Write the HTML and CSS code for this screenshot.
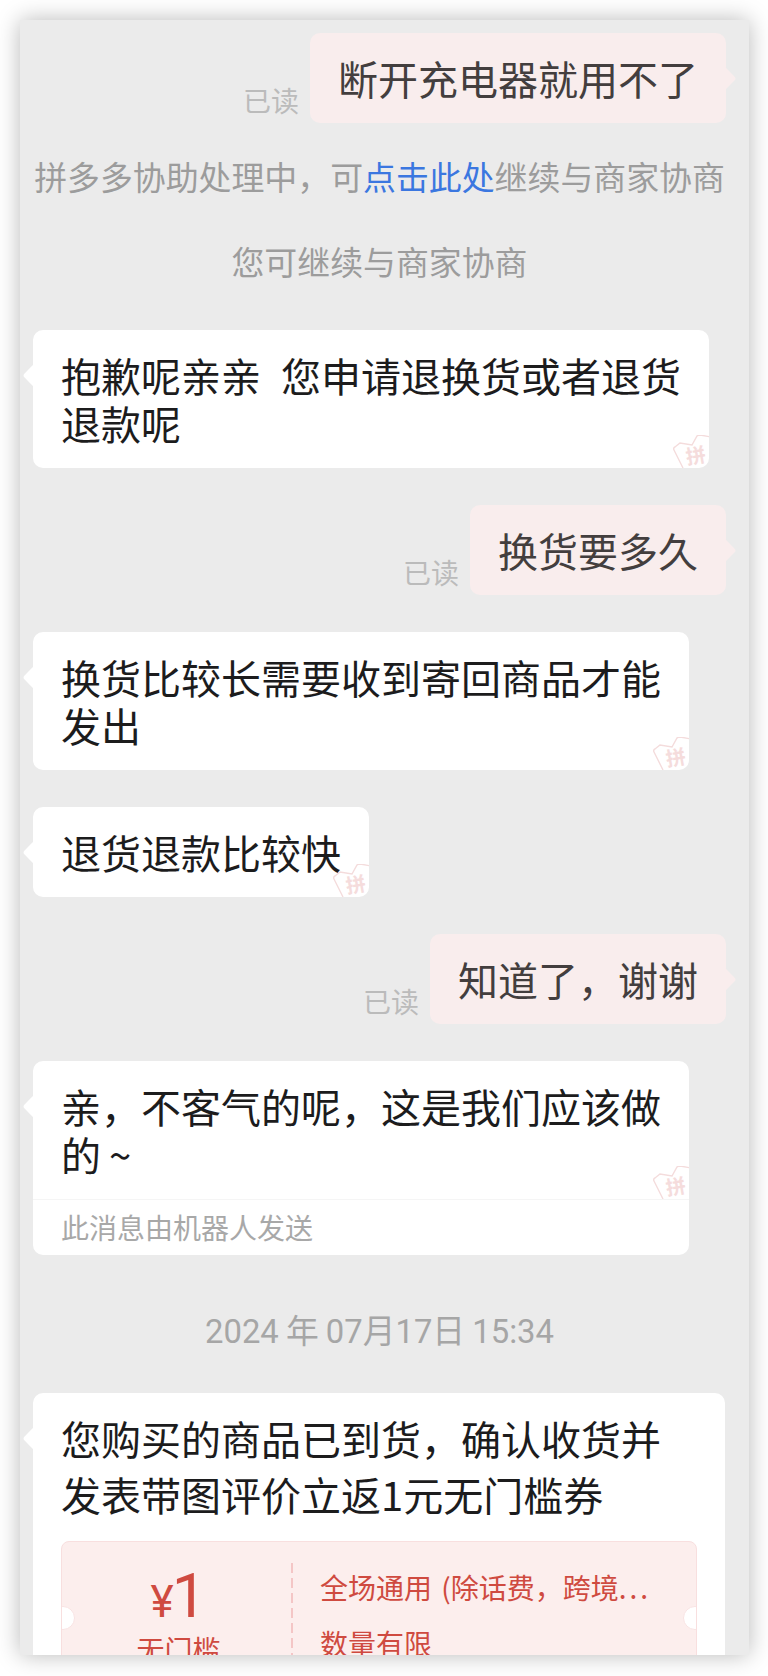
FILE: index.html
```html
<!DOCTYPE html>
<html>
<head>
  <meta charset="utf-8">
  <title>聊天记录</title>
  <link rel="stylesheet" href="styles.css">
</head>
<body>
  <div class="screen">
    <div class="row row-me first">
      <span class="read">已读</span>
      <div class="bubble me">断开充电器就用不了</div>
    </div>

    <p class="notice notice-a">拼多多协助处理中，可<a class="link">点击此处</a>继续与商家协商</p>
    <p class="notice notice-b">您可继续与商家协商</p>

    <div class="row row-shop first-shop">
      <div class="bubble shop">
        <div class="body wide">抱歉呢亲亲&nbsp;&nbsp;您申请退换货或者退货<br>退款呢
          <svg class="stamp" viewBox="0 0 36 33"><use href="#stamp"/><text x="23" y="28" class="stamp-text" transform="rotate(-10 23 21)">拼</text></svg>
        </div>
      </div>
    </div>

    <div class="row row-me">
      <span class="read">已读</span>
      <div class="bubble me">换货要多久</div>
    </div>

    <div class="row row-shop">
      <div class="bubble shop">
        <div class="body">换货比较长需要收到寄回商品才能<br>发出
          <svg class="stamp" viewBox="0 0 36 33"><use href="#stamp"/><text x="23" y="28" class="stamp-text" transform="rotate(-10 23 21)">拼</text></svg>
        </div>
      </div>
    </div>

    <div class="row row-shop">
      <div class="bubble shop">
        <div class="body">退货退款比较快
          <svg class="stamp" viewBox="0 0 36 33"><use href="#stamp"/><text x="23" y="28" class="stamp-text" transform="rotate(-10 23 21)">拼</text></svg>
        </div>
      </div>
    </div>

    <div class="row row-me">
      <span class="read">已读</span>
      <div class="bubble me">知道了，谢谢</div>
    </div>

    <div class="row row-shop">
      <div class="bubble shop">
        <div class="body">亲，不客气的呢，这是我们应该做<br>的<span class="tilde">~</span>
          <svg class="stamp" viewBox="0 0 36 33"><use href="#stamp"/><text x="23" y="28" class="stamp-text" transform="rotate(-10 23 21)">拼</text></svg>
        </div>
        <div class="robot">此消息由机器人发送</div>
      </div>
    </div>

    <p class="time">2024 年 07月17日 15:34</p>

    <div class="card">
      <div class="card-text">您购买的商品已到货，确认收货并<br>发表带图评价立返1元无门槛券</div>
      <div class="coupon">
        <div class="coupon-left">
          <div class="price"><span class="yen">¥</span>1</div>
          <div class="limit">无门槛</div>
        </div>
        <div class="coupon-sep"></div>
        <div class="coupon-right">
          <div class="coupon-line">全场通用 (除话费，跨境<span class="dots">...</span></div>
          <div class="coupon-line">数量有限</div>
        </div>
      </div>
    </div>
  </div>

  <svg class="defs" width="0" height="0">
    <defs>
      <path id="stamp" d="M10 33 L1 15 Q0 13 2 12 L7 8 L19 10 L24 1 Q25 0 27 0 L38 2" fill="none" stroke="#f4dcdc" stroke-width="1.4"/>
    </defs>
  </svg>
</body>
</html>
```

FILE: styles.css
```css
* {
  box-sizing: border-box;
}

html, body {
  margin: 0;
  padding: 0;
  background: #fff;
}

body {
  width: 768px;
  height: 1676px;
  padding: 20px 19px 21px 20px;
  overflow: hidden;
  font-family: "Noto Sans CJK SC", sans-serif;
}

.screen {
  height: 1635px;
  padding: 13px 23px 0 13px;
  background: #ebebeb;
  box-shadow: 0 0 22px rgba(0, 0, 0, .28);
  overflow: hidden;
}

.row {
  display: flex;
  margin-top: 37px;
}

.row.first {
  margin-top: 0;
}

.row.first-shop {
  margin-top: 47px;
}

.row-me {
  justify-content: flex-end;
  align-items: flex-end;
}

.read {
  margin: 0 11px 5px 0;
  font-size: 28px;
  line-height: 36px;
  color: #bbb;
}

.bubble {
  position: relative;
  border-radius: 10px;
  font-size: 40px;
  line-height: 48px;
}

.bubble::before {
  content: "";
  position: absolute;
  top: 37px;
  width: 17px;
  height: 17px;
  border-radius: 3px;
  transform: rotate(45deg);
}

.me {
  padding: 21px 28px;
  background: #f9eded;
  color: #433e3e;
}

.me::before {
  right: -7px;
  background: #f9eded;
}

.shop {
  background: #fff;
  color: #1c1c1d;
}

.shop::before {
  left: -7px;
  background: #fff;
}

.body {
  position: relative;
  padding: 21px 28px;
  overflow: hidden;
  border-radius: 10px 10px 0 0;
}

.body.wide {
  word-spacing: 1px;
}

.tilde {
  margin-left: 8px;
}

.stamp {
  position: absolute;
  right: 0;
  bottom: 0;
  width: 36px;
  height: 33px;
}

.stamp-text {
  font-size: 20px;
  fill: #f5dcdc;
  text-anchor: middle;
  font-weight: 700;
}

.defs {
  position: absolute;
}

.robot {
  height: 56px;
  padding: 0 28px;
  border-top: 1px solid #f5f5f5;
  font-size: 28px;
  line-height: 54px;
  color: #a8a8a8;
}

.notice {
  margin: 0;
  font-size: 32.9px;
  line-height: 44px;
  text-align: center;
  color: #9c9c9c;
}

.notice-a {
  margin-top: 31px;
}

.notice-b {
  margin-top: 41px;
}

.link {
  color: #3b77e0;
}

.time {
  margin: 55px 0 0;
  font-family: Roboto, "Noto Sans CJK SC", sans-serif;
  font-size: 32.8px;
  word-spacing: -1px;
  line-height: 44px;
  text-align: center;
  color: #a6a6a6;
}

.card {
  position: relative;
  margin-top: 39px;
  width: 692px;
  height: 300px;
  padding: 17px 28px 0;
  border-radius: 10px;
  background: #fff;
  font-size: 40px;
  line-height: 56px;
  color: #1c1c1d;
}

.card::before {
  content: "";
  position: absolute;
  left: -7px;
  top: 37px;
  width: 17px;
  height: 17px;
  border-radius: 3px;
  background: #fff;
  transform: rotate(45deg);
}

.coupon {
  position: relative;
  display: flex;
  margin-top: 19px;
  height: 170px;
  border: 1px solid #f8dfdf;
  border-radius: 8px;
  background: #fceeed;
  color: #cf4a40;
  overflow: hidden;
}

.coupon::before,
.coupon::after {
  content: "";
  position: absolute;
  top: 64px;
  width: 22px;
  height: 22px;
  border: 1px solid #f8e3e3;
  border-radius: 50%;
  background: #fff;
}

.coupon::before {
  left: -11px;
}

.coupon::after {
  right: -11px;
}

.coupon-left {
  width: 229px;
  padding: 22px 0 0 4px;
  text-align: center;
}

.price {
  font-family: Roboto, sans-serif;
  font-size: 62px;
  line-height: 64px;
}

.yen {
  font-size: 44px;
  margin-right: -2px;
}

.limit {
  margin-top: -3px;
  font-size: 28px;
  line-height: 36px;
}

.coupon-sep {
  width: 2px;
  margin-top: 21px;
  background: repeating-linear-gradient(#f4c6c6 0 10px, transparent 10px 15px);
}

.coupon-right {
  padding: 17px 0 0 27px;
  font-size: 28px;
  line-height: 56px;
  word-spacing: 3px;
}

.dots {
  letter-spacing: 3px;
}
```
